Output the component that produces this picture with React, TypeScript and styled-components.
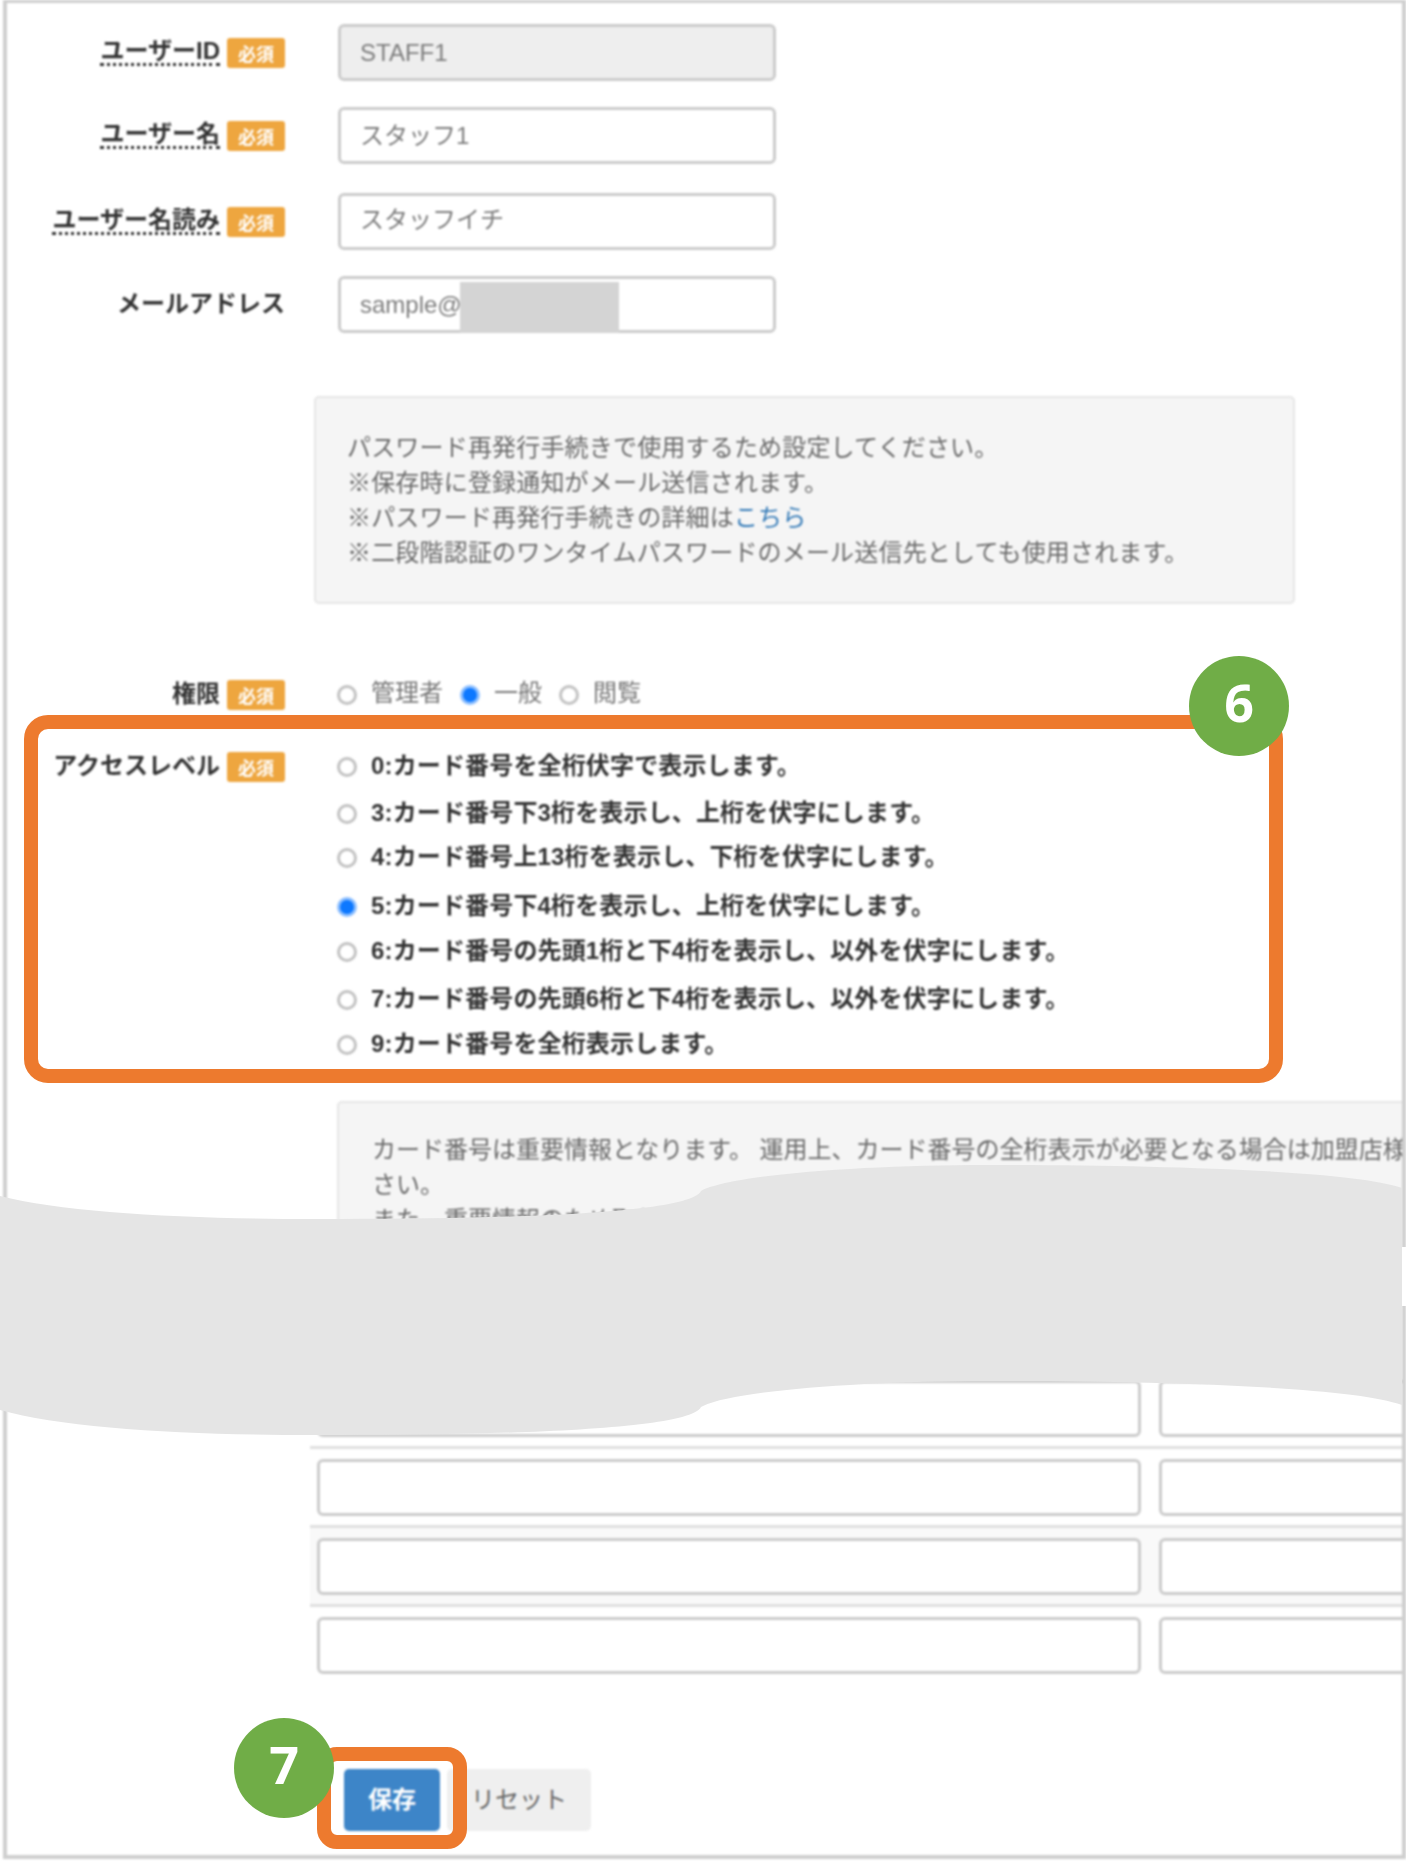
import React from "react";
import styled, { createGlobalStyle } from "styled-components";

const Global = createGlobalStyle`
  html, body { margin: 0; padding: 0; background: #fff; }
  body { font-family: "Liberation Sans", "Noto Sans CJK JP", sans-serif; font-size: 24px; color: #555; }
`;

const Sheet = styled.div`
  position: relative;
  width: 1406px;
  height: 1870px;
  overflow: hidden;
`;

const Page = styled.main`
  box-sizing: border-box;
  width: 1403px;
  height: 1859px;
  margin-left: 3px;
  padding-top: 21px;
  border: solid #cfcfcf;
  border-width: 3px 4px 4px 4px;
  overflow: hidden;
  filter: blur(0.8px);
`;

const FieldRow = styled.div<{ $top?: number; $height?: number; $align?: string }>`
  display: flex;
  align-items: ${(p) => p.$align ?? "center"};
  height: ${(p) => (p.$height ? `${p.$height}px` : "auto")};
  margin-top: ${(p) => p.$top ?? 0}px;
`;

const LabelCol = styled.div`
  flex: 0 0 278px;
  display: flex;
  justify-content: flex-end;
  align-items: center;
  gap: 7px;
`;

const LabelText = styled.span<{ $dotted?: boolean }>`
  font-weight: 700;
  color: #333;
  line-height: 24px;
  white-space: nowrap;
  padding-bottom: ${(p) => (p.$dotted ? 0 : 2)}px;
  border-bottom: ${(p) => (p.$dotted ? "3px dotted #333" : "none")};
`;

const Badge = styled.span`
  flex: none;
  width: 58px;
  height: 30px;
  display: flex;
  align-items: center;
  justify-content: center;
  border-radius: 3px;
  background: #eea63f;
  color: #fff;
  font-size: 18px;
  font-weight: 700;
`;

const Control = styled.div`
  position: relative;
  margin-left: 53px;
  width: 438px;
  height: 57px;
`;

const TextInput = styled.input<{ $locked?: boolean; $lift?: number }>`
  box-sizing: border-box;
  width: 100%;
  height: 100%;
  padding: 0 0 ${(p) => p.$lift ?? 0}px 19px;
  border: 3px solid #ccc;
  border-radius: 6px;
  outline: none;
  background: ${(p) => (p.$locked ? "#eee" : "#fff")};
  color: #7c7c7c;
  font: 24px "Liberation Sans", "Noto Sans CJK JP", sans-serif;
`;

const Redaction = styled.div`
  position: absolute;
  left: 122px;
  top: 6px;
  width: 159px;
  height: 51px;
  background: #d4d4d4;
`;

const InfoBox = styled.div<{ $left: number; $top: number; $width: number; $pad: number; $padTop: number; $track?: number }>`
  box-sizing: border-box;
  margin: ${(p) => p.$top}px 0 0 ${(p) => p.$left}px;
  width: ${(p) => p.$width}px;
  padding: ${(p) => p.$padTop}px 0 32px ${(p) => p.$pad}px;
  background: #f5f5f5;
  border: 2px solid #e6e6e6;
  border-radius: 5px;
  color: #6a6a6a;
  line-height: 35px;
  letter-spacing: ${(p) => p.$track ?? 0}px;
  white-space: nowrap;
`;

const InfoLine = styled.div``;

const InfoLink = styled.a`
  color: #337ab7;
  text-decoration: none;
`;

const RadioInput = styled.input`
  appearance: none;
  flex: none;
  box-sizing: border-box;
  width: 20px;
  height: 20px;
  margin: 0 14px 0 0;
  border-radius: 50%;
  border: 3px solid #c2c2c2;
  background: #fff;
  &:checked {
    background: #0d78ff;
    border-color: #8dbfff;
  }
`;

const OptionText = styled.span<{ $lift: number }>`
  padding-bottom: ${(p) => p.$lift}px;
`;

const RadioGroup = styled.div`
  display: flex;
  margin-left: 52px;
  gap: 17px;
`;

const RadioOption = styled.label`
  display: flex;
  align-items: center;
  color: #777;
  white-space: nowrap;
  line-height: 30px;
`;

const AccessList = styled.div`
  margin-left: 52px;
`;

const AccessOption = styled.label<{ $top: number }>`
  display: flex;
  align-items: center;
  height: 30px;
  margin-top: ${(p) => p.$top}px;
  font-weight: 700;
  color: #333;
  letter-spacing: 0.15px;
  white-space: nowrap;
`;

const GridTable = styled.div`
  margin: 64px 0 0 303px;
`;

const GridRow = styled.div<{ $shade?: boolean }>`
  display: flex;
  gap: 18px;
  padding: 10px 0 9px 7px;
  border-bottom: 3px solid #e0e0e0;
  background: ${(p) => (p.$shade ? "#f9f9f9" : "#fff")};
  &:last-child { border-bottom: none; }
`;

const GridInput = styled.input<{ $wide?: boolean }>`
  flex: none;
  box-sizing: border-box;
  width: ${(p) => (p.$wide ? 824 : 320)}px;
  height: 57px;
  border: 3px solid #ccc;
  border-radius: 6px;
  outline: none;
  background: #fff;
`;

const ActionBar = styled.div`
  display: flex;
  gap: 7px;
  margin: 86px 0 0 337px;
`;

const SaveButton = styled.button`
  width: 96px;
  height: 62px;
  padding: 0 0 5px;
  border: none;
  border-radius: 5px;
  background: #3d85c8;
  color: #fff;
  font: 700 24px "Liberation Sans", "Noto Sans CJK JP", sans-serif;
`;

const ResetButton = styled.button`
  width: 144px;
  height: 62px;
  padding: 0 0 5px;
  border: none;
  border-radius: 5px;
  background: #efefef;
  color: #666;
  font: 24px "Liberation Sans", "Noto Sans CJK JP", sans-serif;
`;

const Callout = styled.div<{ $x: number; $y: number; $w: number; $h: number; $r: number }>`
  position: absolute;
  box-sizing: border-box;
  left: ${(p) => p.$x}px;
  top: ${(p) => p.$y}px;
  width: ${(p) => p.$w}px;
  height: ${(p) => p.$h}px;
  border: 14px solid #ed7a2e;
  border-radius: ${(p) => p.$r}px;
  pointer-events: none;
  filter: blur(0.4px);
`;

const StepCircle = styled.div<{ $x: number; $y: number }>`
  position: absolute;
  left: ${(p) => p.$x}px;
  top: ${(p) => p.$y}px;
  width: 100px;
  height: 100px;
  border-radius: 50%;
  background: #70ad47;
  color: #fff;
  display: flex;
  align-items: center;
  justify-content: center;
  padding-bottom: 9px;
  box-sizing: border-box;
  font: 700 52px "Open Sans", sans-serif;
`;

const Wave = styled.svg`
  position: absolute;
  left: 0;
  top: 1150px;
  width: 1403px;
  height: 300px;
`;

const EdgeGap = styled.div`
  position: absolute;
  left: 1402px;
  top: 1247px;
  width: 4px;
  height: 59px;
  background: #fff;
`;

const accessLevels: [string, number, boolean?][] = [
  ["0:カード番号を全桁伏字で表示します。", 0],
  ["3:カード番号下3桁を表示し、上桁を伏字にします。", 17],
  ["4:カード番号上13桁を表示し、下桁を伏字にします。", 14],
  ["5:カード番号下4桁を表示し、上桁を伏字にします。", 19, true],
  ["6:カード番号の先頭1桁と下4桁を表示し、以外を伏字にします。", 15],
  ["7:カード番号の先頭6桁と下4桁を表示し、以外を伏字にします。", 18],
  ["9:カード番号を全桁表示します。", 15],
];

const Required = () => <Badge>必須</Badge>;

export default function App() {
  return (
    <>
      <Global />
      <Sheet>
        <Page>
          <FieldRow $height={57}>
            <LabelCol>
              <LabelText $dotted>ユーザーID</LabelText>
              <Required />
            </LabelCol>
            <Control>
              <TextInput $locked readOnly value="STAFF1" />
            </Control>
          </FieldRow>
          <FieldRow $height={57} $top={26}>
            <LabelCol>
              <LabelText $dotted>ユーザー名</LabelText>
              <Required />
            </LabelCol>
            <Control>
              <TextInput $lift={4} readOnly value="スタッフ1" />
            </Control>
          </FieldRow>
          <FieldRow $height={57} $top={29}>
            <LabelCol>
              <LabelText $dotted>ユーザー名読み</LabelText>
              <Required />
            </LabelCol>
            <Control>
              <TextInput $lift={8} readOnly value="スタッフイチ" />
            </Control>
          </FieldRow>
          <FieldRow $height={57} $top={26}>
            <LabelCol>
              <LabelText>メールアドレス</LabelText>
            </LabelCol>
            <Control>
              <TextInput readOnly value="sample@" />
              <Redaction />
            </Control>
          </FieldRow>

          <InfoBox $left={307} $top={63} $width={981} $pad={31} $padTop={32} $track={0.18}>
            <InfoLine>パスワード再発行手続きで使用するため設定してください。</InfoLine>
            <InfoLine>※保存時に登録通知がメール送信されます。</InfoLine>
            <InfoLine>
              ※パスワード再発行手続きの詳細は<InfoLink href="#">こちら</InfoLink>
            </InfoLine>
            <InfoLine>※二段階認証のワンタイムパスワードのメール送信先としても使用されます。</InfoLine>
          </InfoBox>

          <FieldRow $height={30} $top={76}>
            <LabelCol>
              <LabelText>権限</LabelText>
              <Required />
            </LabelCol>
            <RadioGroup>
              <RadioOption>
                <RadioInput type="radio" name="role" />
                <OptionText $lift={5}>管理者</OptionText>
              </RadioOption>
              <RadioOption>
                <RadioInput type="radio" name="role" defaultChecked />
                <OptionText $lift={5}>一般</OptionText>
              </RadioOption>
              <RadioOption>
                <RadioInput type="radio" name="role" />
                <OptionText $lift={5}>閲覧</OptionText>
              </RadioOption>
            </RadioGroup>
          </FieldRow>

          <FieldRow $top={42} $align="flex-start">
            <LabelCol>
              <LabelText>アクセスレベル</LabelText>
              <Required />
            </LabelCol>
            <AccessList>
              {accessLevels.map(([text, top, checked]) => (
                <AccessOption key={text} $top={top}>
                  <RadioInput type="radio" name="access" defaultChecked={!!checked} />
                  <OptionText $lift={7}>{text}</OptionText>
                </AccessOption>
              ))}
            </AccessList>
          </FieldRow>

          <InfoBox $left={330} $top={41} $width={1100} $pad={33} $padTop={29}>
            <InfoLine>カード番号は重要情報となります。 運用上、カード番号の全桁表示が必要となる場合は加盟店様へご相談くだ</InfoLine>
            <InfoLine>さい。</InfoLine>
            <InfoLine>また、重要情報のため取り扱いにはご注意ください。</InfoLine>
            <InfoLine>&nbsp;</InfoLine>
          </InfoBox>

          <GridTable>
            <GridRow>
              <GridInput $wide />
              <GridInput />
            </GridRow>
            <GridRow>
              <GridInput $wide />
              <GridInput />
            </GridRow>
            <GridRow $shade>
              <GridInput $wide />
              <GridInput />
            </GridRow>
            <GridRow>
              <GridInput $wide />
              <GridInput />
            </GridRow>
          </GridTable>

          <ActionBar>
            <SaveButton>保存</SaveButton>
            <ResetButton>リセット</ResetButton>
          </ActionBar>
        </Page>

        <Callout $x={24} $y={715} $w={1259} $h={368} $r={24} />
        <StepCircle $x={1189} $y={656}>6</StepCircle>
        <Callout $x={317} $y={1747} $w={150} $h={102} $r={20} />
        <StepCircle $x={234} $y={1718}>7</StepCircle>

        <EdgeGap />
        <Wave viewBox="0 1150 1403 300" aria-hidden="true">
          <path
            fill="#e5e5e5"
            d="M0,1196 C70,1214 210,1220 341,1219 C500,1219 690,1214 701,1191 C730,1175 860,1165 987,1165 C1150,1165 1350,1170 1402,1188
               L1402,1405 C1350,1386 1150,1381 987,1381 C860,1381 730,1391 701,1407 C690,1430 500,1435 341,1435 C210,1436 70,1430 0,1410 Z"
          />
        </Wave>
      </Sheet>
    </>
  );
}
